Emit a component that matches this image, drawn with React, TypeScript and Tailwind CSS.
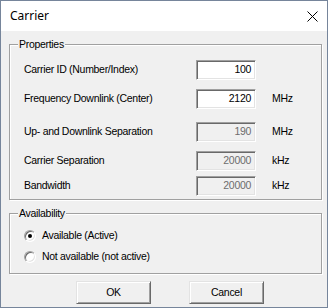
import React, { useState } from "react"

type Row = {
  label: string
  value: string
  unit?: string
  disabled?: boolean
  gap: string
}

const rows: Row[] = [
  { label: "Carrier ID (Number/Index)", value: "100", gap: "mt-[15px]" },
  {
    label: "Frequency Downlink (Center)",
    value: "2120",
    unit: "MHz",
    gap: "mt-[9px]",
  },
  {
    label: "Up- and Downlink Separation",
    value: "190",
    unit: "MHz",
    disabled: true,
    gap: "mt-[13px]",
  },
  {
    label: "Carrier Separation",
    value: "20000",
    unit: "kHz",
    disabled: true,
    gap: "mt-[9px]",
  },
  {
    label: "Bandwidth",
    value: "20000",
    unit: "kHz",
    disabled: true,
    gap: "mt-[5px]",
  },
]

const Radio: React.FC<{ checked: boolean }> = ({ checked }) => (
  <span className="flex items-center justify-center w-[12px] h-[12px] rounded-full bg-white border border-t-[#a0a0a0] border-l-[#a0a0a0] border-b-white border-r-white shadow-[inset_1px_1px_#696969,inset_-1px_-1px_#e3e3e3]">
    {checked && <span className="w-[4px] h-[4px] rounded-full bg-black" />}
  </span>
)

const GroupBox: React.FC<{
  title: string
  className: string
  children: React.ReactNode
}> = ({ title, className, children }) => (
  <div
    className={`relative ml-[8px] w-[313px] border border-[#a0a0a0] shadow-[inset_1px_1px_#fff,1px_1px_#fff] ${className}`}
  >
    <span className="absolute left-[8px] top-[-8px] bg-[#f0f0f0] px-[1px] leading-[14px]">
      {title}
    </span>
    {children}
  </div>
)

export default function App() {
  const [active, setActive] = useState(true)

  return (
    <div className="w-[328px] h-[308px] flex flex-col border border-[#76859b] bg-[#f0f0f0] text-[10.5px] text-black font-['Liberation_Sans',Arial,sans-serif] tracking-[-0.3px]">
      <div className="h-[30px] shrink-0 bg-white flex items-center justify-between pl-[9px] pr-[9px]">
        <span className="text-[12px] tracking-normal font-['Noto_Sans','Liberation_Sans',sans-serif]">
          Carrier
        </span>
        <svg width="11" height="11" viewBox="0 0 11 11">
          <path d="M0.5 0.5 L10.5 10.5 M10.5 0.5 L0.5 10.5" stroke="#000" strokeWidth="1" />
        </svg>
      </div>

      <GroupBox title="Properties" className="mt-[13px] h-[156px]">
        {rows.map((r) => (
          <div key={r.label} className={`flex items-center h-[20px] ${r.gap}`}>
            <span className="w-[186px] pl-[14px] whitespace-nowrap">{r.label}</span>
            <div
              className={`w-[60px] h-[20px] flex items-center justify-end pr-[4px] border border-t-[#a0a0a0] border-l-[#a0a0a0] border-b-white border-r-white shadow-[inset_1px_1px_#696969,inset_-1px_-1px_#e3e3e3] ${
                r.disabled ? "bg-[#f0f0f0] text-[#6d6d6d]" : "bg-white text-black"
              }`}
            >
              {r.value}
            </div>
            {r.unit && <span className="ml-[16px]">{r.unit}</span>}
          </div>
        ))}
      </GroupBox>

      <GroupBox title="Availability" className="mt-[13px] h-[61px]">
        <div className="flex flex-col pl-[14px] mt-[15px] gap-[8px]">
          <label className="flex items-center gap-[6px] h-[13px]" onClick={() => setActive(true)}>
            <Radio checked={active} />
            <span>Available (Active)</span>
          </label>
          <label className="flex items-center gap-[6px] h-[13px]" onClick={() => setActive(false)}>
            <Radio checked={!active} />
            <span>Not available (not active)</span>
          </label>
        </div>
      </GroupBox>

      <div className="flex mt-[7px] ml-[75px] gap-[38px]">
        {["OK", "Cancel"].map((b) => (
          <button
            key={b}
            className="w-[75px] h-[23px] flex items-center justify-center border border-t-[#e3e3e3] border-l-[#e3e3e3] border-b-[#696969] border-r-[#696969] shadow-[inset_1px_1px_#fff,inset_-1px_-1px_#a0a0a0] bg-[#f0f0f0]"
          >
            {b}
          </button>
        ))}
      </div>
    </div>
  )
}
